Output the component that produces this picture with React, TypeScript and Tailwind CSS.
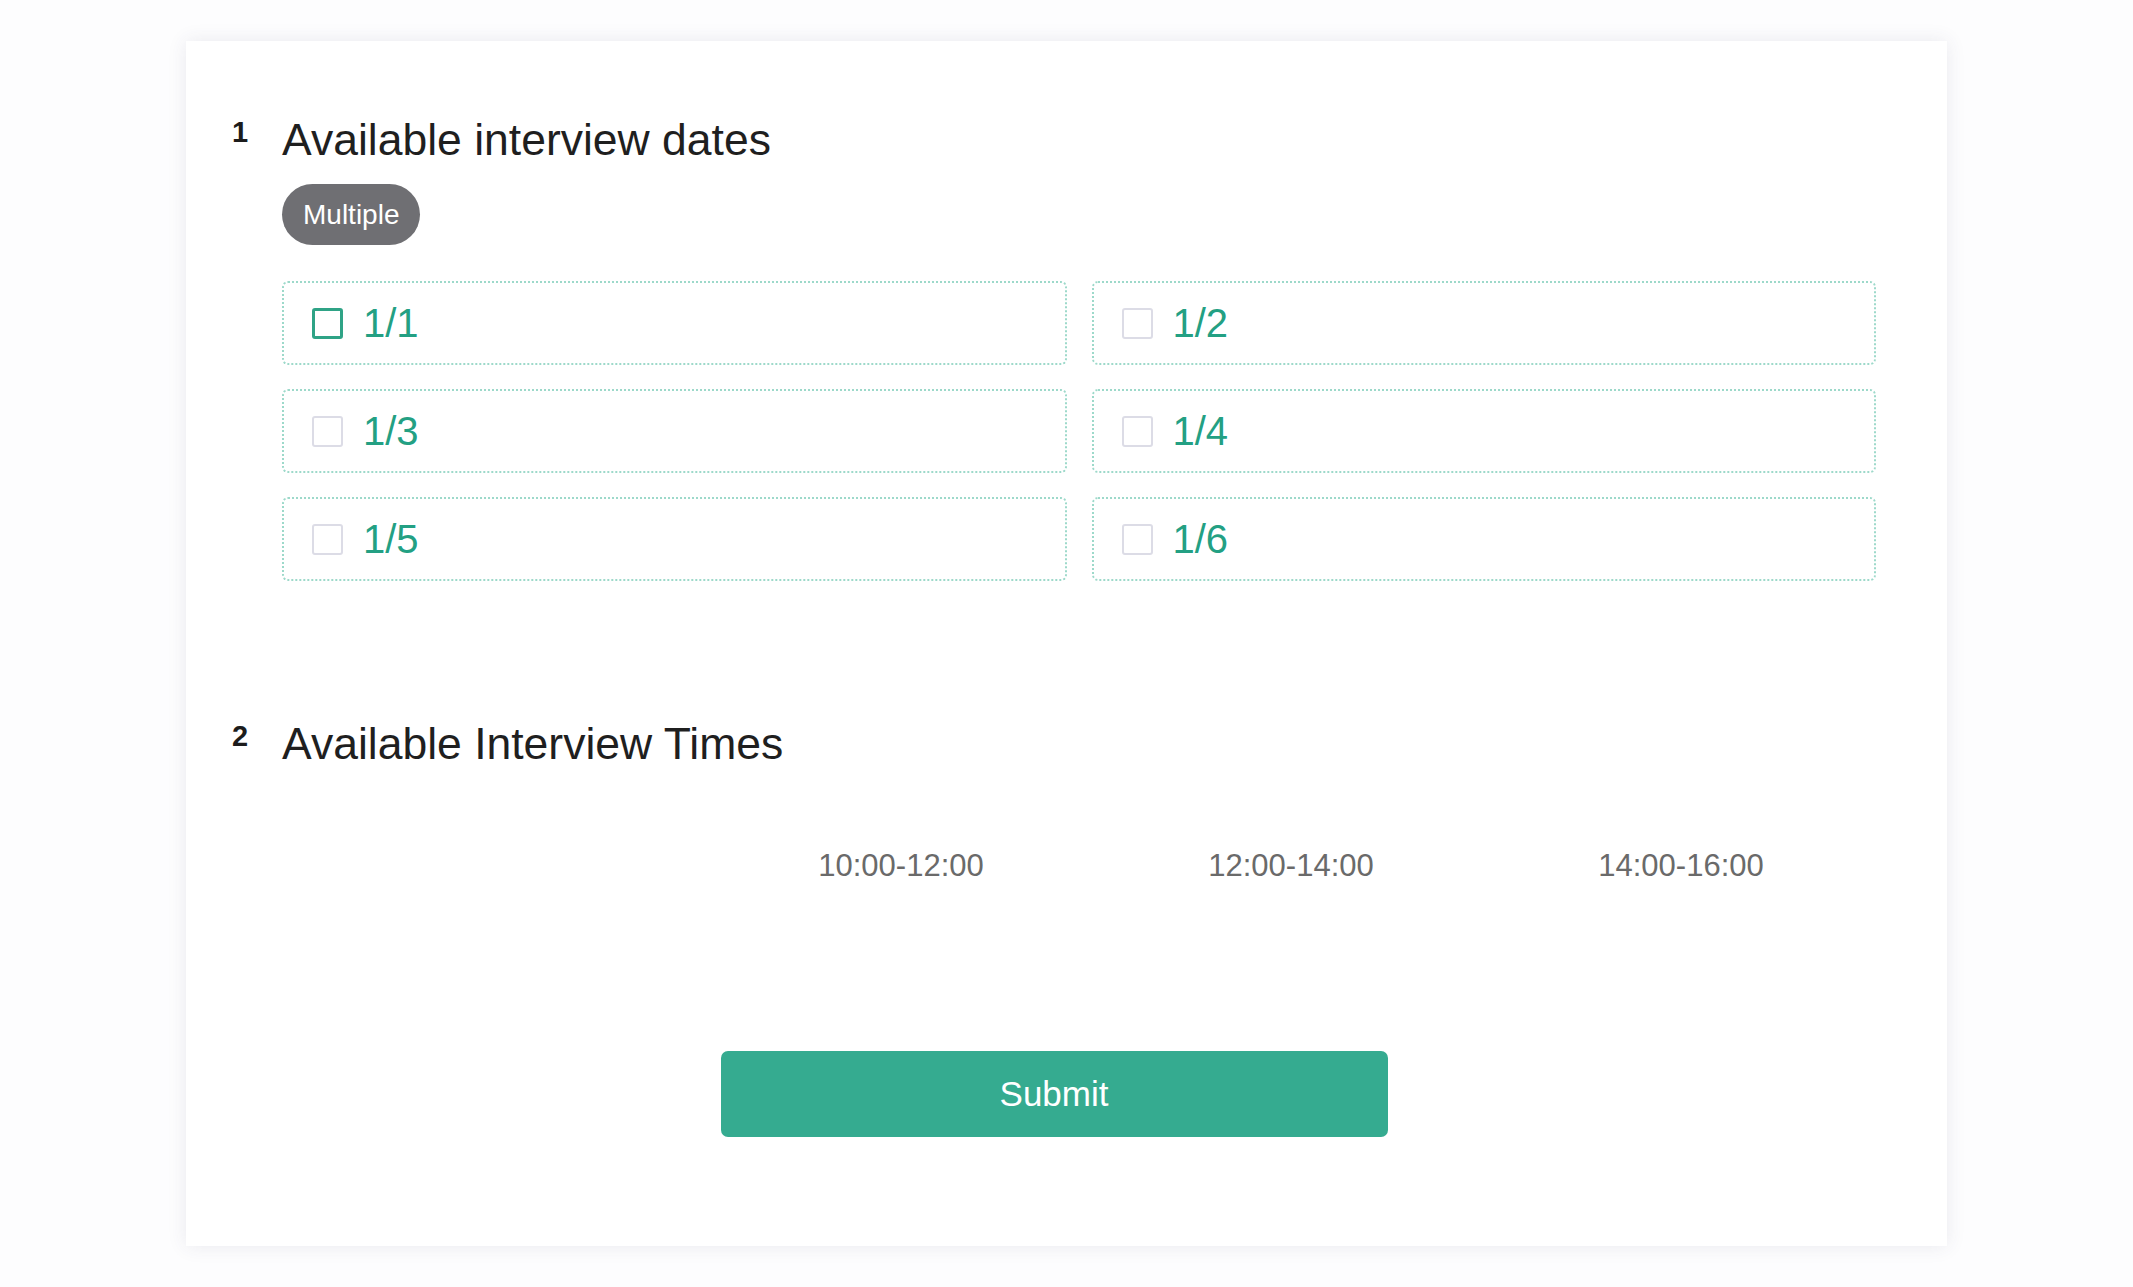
import React from "react";

const dates = ["1/1", "1/2", "1/3", "1/4", "1/5", "1/6"];
const times = ["10:00-12:00", "12:00-14:00", "14:00-16:00"];

function Option({ label, active }: { label: string; active?: boolean }) {
  return (
    <div className="h-[84px] flex items-center pl-[28px] border-2 border-dotted border-[#9dd9ca] rounded-[6px] bg-white">
      <span
        className={
          active
            ? "w-[31px] h-[31px] rounded-[3px] border-[3px] border-[#2fa386] box-border shrink-0"
            : "w-[31px] h-[31px] rounded-[3px] border-2 border-[#dcdce6] box-border shrink-0"
        }
      />
      <span className="ml-[20px] text-[40px] leading-[48px] text-[#23a083]">{label}</span>
    </div>
  );
}

export default function App() {
  return (
    <div
      className="min-h-[1287px] bg-[#fdfdfe] pt-[41px] pb-[44px]"
      style={{ fontFamily: '"Liberation Sans", Arial, sans-serif' }}
    >
      <div className="mx-auto w-[1761px] bg-white shadow-[0_0_18px_rgba(60,60,100,0.10)] pl-[46px] pr-[71px] pt-[73px] pb-[109px]">
        {/* Question 1 */}
        <div className="flex">
          <div className="w-[50px] shrink-0 pt-[3px] text-[29px] leading-[30px] font-bold text-[#1c1c1c]">1</div>
          <div className="flex-1">
            <div className="text-[44.5px] leading-[52px] text-[#1f1f1f]">Available interview dates</div>
            <div className="mt-[18px] inline-flex h-[61px] items-center rounded-full bg-[#6f6f73] px-[21px] text-[28px] text-white">
              Multiple
            </div>
            <div className="mt-[36px] grid grid-cols-2 gap-x-[25px] gap-y-[24px]">
              {dates.map((d, i) => (
                <Option key={d} label={d} active={i === 0} />
              ))}
            </div>
          </div>
        </div>

        {/* Question 2 */}
        <div className="flex mt-[137px]">
          <div className="w-[50px] shrink-0 pt-[3px] text-[29px] leading-[30px] font-bold text-[#1c1c1c]">2</div>
          <div className="flex-1">
            <div className="text-[44.5px] leading-[52px] text-[#1f1f1f]">Available Interview Times</div>
            <div className="mt-[76px] grid grid-cols-[424px_1fr_1fr_1fr]">
              <div />
              {times.map((t) => (
                <div key={t} className="text-center text-[31px] leading-[40px] text-[#6a6a6a]">
                  {t}
                </div>
              ))}
            </div>
          </div>
        </div>

        <div className="mt-[165px] flex justify-center">
          <button className="w-[667px] h-[86px] rounded-[7px] bg-[#35ab90] text-white text-[35px]">
            Submit
          </button>
        </div>
      </div>
    </div>
  );
}
